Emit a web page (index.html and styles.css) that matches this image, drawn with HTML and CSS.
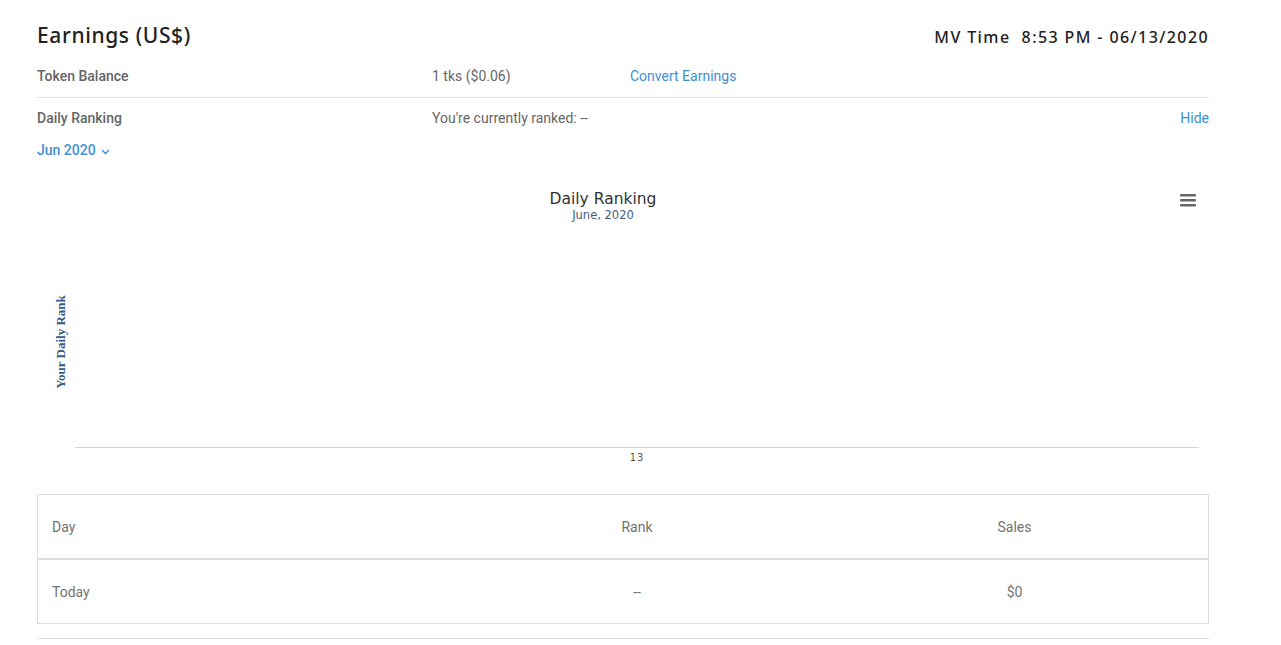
FILE: index.html
```html
<!DOCTYPE html>
<html lang="en">
<head>
    <meta charset="UTF-8">
    <title>Earnings</title>
    <link rel="stylesheet" href="styles.css">
</head>
<body>
    <div class="page">
        <div class="page-header">
            <h1>Earnings (US$)</h1>
            <div class="mv-time">MV Time&nbsp; 8:53 PM - 06/13/2020</div>
        </div>

        <div class="info-row bordered">
            <div class="label">Token Balance</div>
            <div class="value">1 tks ($0.06)</div>
            <a class="link" href="#">Convert Earnings</a>
        </div>

        <div class="info-row ranking">
            <div class="label">Daily Ranking</div>
            <div class="value">You're currently ranked: --</div>
            <a class="link hide" href="#">Hide</a>
        </div>

        <a class="month" href="#">Jun 2020
            <svg width="9" height="6" viewBox="0 0 9 6"><path d="M1 1l3.5 3.5L8 1" fill="none" stroke="currentColor" stroke-width="1.4"/></svg>
        </a>

        <div class="chart">
            <svg width="1172" height="310" viewBox="0 0 1172 310">
                <text class="chart-title" x="566" y="34" text-anchor="middle">Daily Ranking</text>
                <text class="chart-subtitle" x="566" y="49" text-anchor="middle">June, 2020</text>
                <g class="menu">
                    <rect x="1143" y="24" width="16" height="2.6" rx="1"/>
                    <rect x="1143" y="29" width="16" height="2.6" rx="1"/>
                    <rect x="1143" y="34" width="16" height="2.6" rx="1"/>
                </g>
                <text class="axis-title" transform="translate(28 172) rotate(-90)" text-anchor="middle">Your Daily Rank</text>
                <line x1="38" y1="277.5" x2="1162" y2="277.5" stroke="#ccd6eb" stroke-width="1"/>
                <text class="axis-label" x="600" y="291" text-anchor="middle">13</text>
            </svg>
        </div>

        <table class="rank-table">
            <thead>
                <tr>
                    <th class="col-day">Day</th>
                    <th class="col-rank">Rank</th>
                    <th class="col-sales">Sales</th>
                </tr>
            </thead>
            <tbody>
                <tr>
                    <td class="col-day">Today</td>
                    <td class="col-rank">--</td>
                    <td class="col-sales">$0</td>
                </tr>
            </tbody>
        </table>
        <div class="table-foot"></div>
    </div>
</body>
</html>
```

FILE: styles.css
```css
body {
    margin: 0;
    padding: 0;
    font-family: Roboto, 'Liberation Sans', sans-serif;
    background: #fff;
    color: #666;
}

.page {
    width: 1172px;
    margin-left: 37px;
}

.page-header {
    display: flex;
    justify-content: space-between;
    align-items: center;
    padding-top: 19px;
    height: 32px;
    margin-bottom: 4px;
}

h1 {
    margin: 0;
    font-family: 'Noto Sans', sans-serif;
    font-size: 21px;
    font-weight: 500;
    color: #222;
    letter-spacing: 0.6px;
}

.mv-time {
    font-family: 'Noto Sans', sans-serif;
    font-size: 16px;
    font-weight: 500;
    color: #222;
    letter-spacing: 1.4px;
    margin-top: 3px;
}

.info-row {
    display: flex;
    align-items: center;
    font-size: 14px;
    line-height: 18px;
    padding: 12px 0;
}

.info-row.bordered {
    border-bottom: 1px solid #e2e2e2;
}

.info-row.ranking {
    padding: 11px 0 13px;
}

.label {
    width: 395px;
    font-weight: 500;
}

.value {
    width: 198px;
}

.link {
    color: #3d8fd6;
    text-decoration: none;
}

.link.hide {
    margin-left: auto;
}

.month {
    display: inline-flex;
    align-items: center;
    gap: 5px;
    font-size: 14px;
    line-height: 18px;
    font-weight: 500;
    color: #3d8fd6;
    text-decoration: none;
}

.month svg {
    margin-top: 3px;
}

.chart {
    margin-top: 11px;
    height: 310px;
}

.chart svg {
    display: block;
}

.chart-title {
    font-family: 'DejaVu Sans', sans-serif;
    font-size: 15.5px;
    fill: #333;
}

.chart-subtitle {
    font-family: 'DejaVu Sans', sans-serif;
    font-size: 11.5px;
    fill: #4a5c80;
}

.menu rect {
    fill: #666;
}

.axis-title {
    font-family: 'Liberation Serif', serif;
    font-size: 13px;
    font-weight: bold;
    fill: #335c8a;
}

.axis-label {
    font-family: 'DejaVu Sans', sans-serif;
    font-size: 10px;
    fill: #555;
    letter-spacing: 1px;
}

.rank-table {
    width: 100%;
    margin-top: 14px;
    border-collapse: collapse;
    border: 1px solid #ddd;
    font-size: 14px;
}

.rank-table th,
.rank-table td {
    height: 63px;
    padding: 0 15px;
    font-weight: normal;
    color: #737373;
}

.rank-table thead th {
    border-bottom: 2px solid #ddd;
}

.col-day {
    width: 386px;
    text-align: left;
}

.rank-table .col-day {
    padding-left: 14px;
}

.col-rank {
    width: 338px;
    text-align: center;
}

.col-sales {
    text-align: center;
}

.table-foot {
    margin-top: 14px;
    border-top: 1px solid #ddd;
}
```
